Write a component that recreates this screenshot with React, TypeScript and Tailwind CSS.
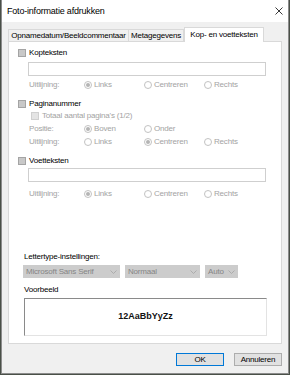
import type { ReactNode } from "react";

const font = { fontFamily: '"Liberation Sans", Arial, sans-serif' };

function Check({ label, dim }: { label: string; dim?: boolean }) {
  return (
    <div className="flex h-[12px] items-center gap-[3px]">
      <span
        className={`box-border h-[8px] w-[8px] border ${
          dim ? "border-[#d0d0d0] bg-[#e4e4e4]" : "border-[#a4a4a4] bg-[#c8c8c8]"
        }`}
      />
      <span className={`leading-none ${dim ? "text-[#a3a3a3]" : "text-black"}`}>{label}</span>
    </div>
  );
}

function Radio({ label, on, width }: { label: string; on?: boolean; width: string }) {
  return (
    <div className={`flex items-center gap-[2px] ${width}`}>
      <span className="box-border flex h-[8px] w-[8px] items-center justify-center rounded-full border border-[#c2c2c2] bg-white">
        {on && <span className="h-[4px] w-[4px] rounded-full bg-[#b4b4b4]" />}
      </span>
      <span className="leading-none text-[#a3a3a3]">{label}</span>
    </div>
  );
}

function RadioRow({ label, children, className }: { label: string; children: ReactNode; className: string }) {
  return (
    <div className={`flex h-[12px] items-center pl-[11px] ${className}`}>
      <span className="w-[55px] leading-none text-[#a3a3a3]">{label}</span>
      {children}
    </div>
  );
}

function Chevron() {
  return (
    <svg width="7" height="4" viewBox="0 0 7 4" className="shrink-0">
      <path d="M0.5 0.5 L3.5 3.5 L6.5 0.5" fill="none" stroke="#a8a8a8" strokeWidth="0.9" />
    </svg>
  );
}

function Combo({ text, width }: { text: string; width: string }) {
  return (
    <div className={`flex h-[13px] items-center justify-between bg-[#cccccc] px-[3px] ${width}`}>
      <span className="leading-none text-[#858585]">{text}</span>
      <Chevron />
    </div>
  );
}

export default function App() {
  return (
    <div
      className="h-[375px] w-[290px] overflow-hidden bg-[#4a5048] text-[8px] tracking-[-0.2px]"
      style={font}
    >
      <div className="ml-px flex h-[374px] w-[288px] flex-col border-x border-b border-[#8c8c8c] bg-[#f0f0f0]">
        <div className="flex h-[22px] shrink-0 items-center justify-between bg-white pl-[5px] pr-[5px]">
          <span className="text-[9px] leading-none text-black">Foto-informatie afdrukken</span>
          <svg width="8" height="8" viewBox="0 0 8 8">
            <path d="M0.5 0.5 L7.5 7.5 M7.5 0.5 L0.5 7.5" stroke="#222" strokeWidth="0.9" />
          </svg>
        </div>

        <div className="ml-[6px] mt-[5px] flex h-[14px] items-end">
          <div className="box-border flex h-[12px] w-[121px] items-center justify-center border-x border-t border-[#d9d9d9] leading-none">
            Opnamedatum/Beeldcommentaar
          </div>
          <div className="box-border flex h-[12px] w-[55px] items-center justify-center border-r border-t border-[#d9d9d9] leading-none">
            Metagegevens
          </div>
          <div className="relative z-10 -mb-px box-border flex h-[15px] w-[80px] items-center justify-center border-x border-t border-[#d9d9d9] bg-white leading-none">
            Kop- en voetteksten
          </div>
        </div>

        <div className="ml-[6px] box-border flex h-[303px] w-[274px] flex-col border border-[#d9d9d9] bg-white pl-[9px] pt-[5px]">
          <Check label="Kopteksten" />
          <div className="ml-[10px] mt-[3px] box-border h-[14px] w-[238px] border border-[#cfcfcf]" />
          <RadioRow label="Uitlijning:" className="mt-[3px]">
            <Radio label="Links" on width="w-[60px]" />
            <Radio label="Centreren" width="w-[60px]" />
            <Radio label="Rechts" width="w-[50px]" />
          </RadioRow>

          <div className="mt-[7px]">
            <Check label="Paginanummer" />
          </div>
          <div className="ml-[13px]">
            <Check label="Totaal aantal pagina's (1/2)" dim />
          </div>
          <RadioRow label="Positie:" className="mt-px">
            <Radio label="Boven" on width="w-[60px]" />
            <Radio label="Onder" width="w-[60px]" />
          </RadioRow>
          <RadioRow label="Uitlijning:" className="mt-px">
            <Radio label="Links" width="w-[60px]" />
            <Radio label="Centreren" on width="w-[60px]" />
            <Radio label="Rechts" width="w-[50px]" />
          </RadioRow>

          <div className="mt-[7px]">
            <Check label="Voetteksten" />
          </div>
          <div className="ml-[10px] mt-px box-border h-[14px] w-[238px] border border-[#cfcfcf]" />
          <RadioRow label="Uitlijning:" className="mt-[6px]">
            <Radio label="Links" on width="w-[60px]" />
            <Radio label="Centreren" width="w-[60px]" />
            <Radio label="Rechts" width="w-[50px]" />
          </RadioRow>

          <div className="ml-[6px] mt-[51px] flex h-[12px] items-center leading-none text-black">
            Lettertype-instellingen:
          </div>
          <div className="ml-[5px] mt-[2px] flex gap-[5px]">
            <Combo text="Microsoft Sans Serif" width="w-[97px]" />
            <Combo text="Normaal" width="w-[75px]" />
            <Combo text="Auto" width="w-[33px]" />
          </div>
          <div className="ml-[6px] mt-[6px] flex h-[12px] items-center leading-none text-black">Voorbeeld</div>
          <div className="ml-[6px] mt-[2px] box-border flex h-[38px] w-[243px] items-center justify-center border border-b-[#e3e3e3] border-l-[#8a8a8a] border-r-[#e3e3e3] border-t-[#8a8a8a] bg-white">
            <span className="text-[9px] font-bold tracking-normal text-[#111]">12AaBbYyZz</span>
          </div>
        </div>

        <div className="ml-[174px] mt-[9px] flex gap-[10px]">
          <button
            type="button"
            className="box-border flex h-[13px] w-[48px] items-center justify-center border border-[#0078d7] bg-[#e1e1e1] leading-none text-black"
          >
            OK
          </button>
          <button
            type="button"
            className="box-border flex h-[13px] w-[48px] items-center justify-center border border-[#adadad] bg-[#e1e1e1] leading-none text-black"
          >
            Annuleren
          </button>
        </div>
      </div>
    </div>
  );
}
